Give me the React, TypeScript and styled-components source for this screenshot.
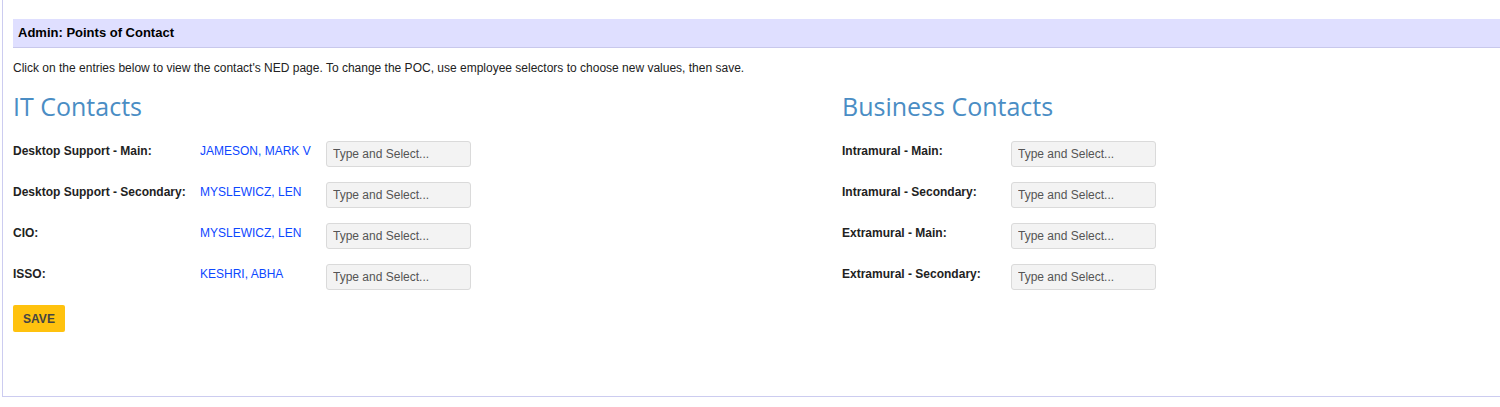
import styled, { createGlobalStyle } from "styled-components";

const GlobalStyle = createGlobalStyle`
  html, body {
    margin: 0;
    padding: 0;
    background: #ffffff;
    overflow: hidden;
  }
  body {
    font-family: "Liberation Sans", Arial, sans-serif;
    font-size: 12px;
    color: #222222;
  }
`;

type Contact = { label: string; name?: string };

const itContacts: Contact[] = [
  { label: "Desktop Support - Main:", name: "JAMESON, MARK V" },
  { label: "Desktop Support - Secondary:", name: "MYSLEWICZ, LEN" },
  { label: "CIO:", name: "MYSLEWICZ, LEN" },
  { label: "ISSO:", name: "KESHRI, ABHA" },
];

const businessContacts: Contact[] = [
  { label: "Intramural - Main:" },
  { label: "Intramural - Secondary:" },
  { label: "Extramural - Main:" },
  { label: "Extramural - Secondary:" },
];

function App() {
  return (
    <>
      <GlobalStyle />
      <Page>
        <TitleBar>Admin: Points of Contact</TitleBar>
        <Intro>
          Click on the entries below to view the contact's NED page. To change
          the POC, use employee selectors to choose new values, then save.
        </Intro>
        <Columns>
          <Column>
            <SectionTitle>IT Contacts</SectionTitle>
            {itContacts.map((c) => (
              <Row key={c.label}>
                <Label labelwidth={187}>{c.label}</Label>
                <NameLink href="#">{c.name}</NameLink>
                <Selector placeholder="Type and Select..." />
              </Row>
            ))}
            <SaveButton>SAVE</SaveButton>
          </Column>
          <Column>
            <SectionTitle>Business Contacts</SectionTitle>
            {businessContacts.map((c) => (
              <Row key={c.label}>
                <Label labelwidth={169}>{c.label}</Label>
                <Selector placeholder="Type and Select..." />
              </Row>
            ))}
          </Column>
        </Columns>
      </Page>
    </>
  );
}

const Page = styled.div`
  margin-left: 2px;
  height: 397px;
  box-sizing: border-box;
  padding: 19px 0 0 10px;
  border-left: 1px solid #ccccf0;
  border-bottom: 1px solid #ccccf0;
`;

const TitleBar = styled.div`
  height: 28px;
  line-height: 28px;
  padding-left: 5px;
  background: #dfdfff;
  border-bottom: 1px solid #c8c8ec;
  font-size: 13px;
  font-weight: 700;
  color: #000000;
`;

const Intro = styled.p`
  margin: 12px 0 0;
  line-height: 16px;
  font-size: 12px;
  color: #222222;
`;

const Columns = styled.div`
  display: grid;
  grid-template-columns: 829px 1fr;
`;

const Column = styled.div`
  display: flex;
  flex-direction: column;
  align-items: flex-start;
`;

const SectionTitle = styled.h2`
  margin: 14px 0 19px;
  font-family: "Open Sans", "DejaVu Sans", sans-serif;
  font-weight: 400;
  font-size: 25px;
  line-height: 32px;
  color: #4a8dc4;
`;

const Row = styled.div`
  display: flex;
  align-items: flex-start;
  margin-bottom: 15px;
`;

const Label = styled.div<{ labelwidth: number }>`
  width: ${(p) => p.labelwidth}px;
  padding-top: 2px;
  font-size: 12px;
  font-weight: 700;
  line-height: 16px;
  color: #222222;
`;

const NameLink = styled.a`
  width: 126px;
  padding-top: 2px;
  font-size: 12px;
  line-height: 16px;
  color: #0d47ff;
  text-decoration: none;
`;

const Selector = styled.input`
  box-sizing: border-box;
  width: 145px;
  height: 26px;
  padding: 0 6px;
  background: #f3f3f3;
  border: 1px solid #dadada;
  border-radius: 3px;
  font-family: "Liberation Sans", Arial, sans-serif;
  font-size: 12px;
  color: #333333;
  outline: none;

  &::placeholder {
    color: #555555;
  }
`;

const SaveButton = styled.button`
  box-sizing: border-box;
  width: 52px;
  height: 27px;
  padding: 0;
  background: #ffc20e;
  border: none;
  border-radius: 2px;
  font-family: "Liberation Sans", Arial, sans-serif;
  font-size: 12px;
  font-weight: 700;
  color: #444444;
  cursor: pointer;
`;

export default App;
